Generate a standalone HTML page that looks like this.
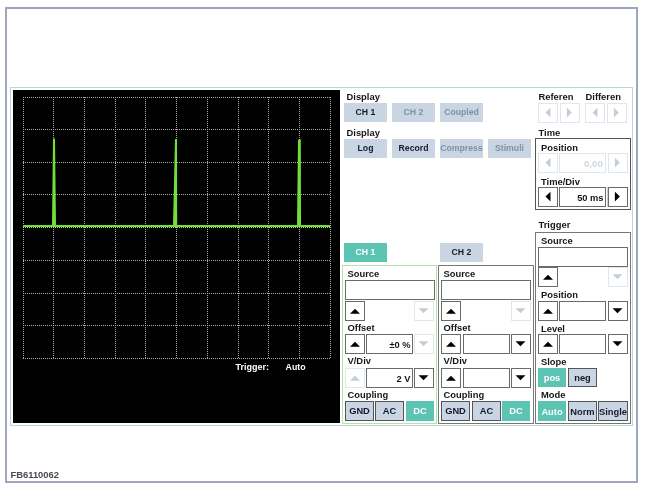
<!DOCTYPE html>
<html><head><meta charset="utf-8"><style>
html,body{margin:0;padding:0;background:#fff;width:645px;height:489px;overflow:hidden;position:relative;font-family:"Liberation Sans", sans-serif;}
body{will-change:transform;}
div{position:absolute;}
.t{white-space:nowrap;line-height:12px;}
.b{text-align:center;font-weight:bold;white-space:nowrap;overflow:hidden;}
svg{position:absolute;left:0;top:0;}
</style></head><body>
<div style="left:5px;top:7px;width:633px;height:476px;border:2px solid #9ea5bd;border-right-color:#9ca9c6;box-sizing:border-box;"></div>
<div style="left:10px;top:87px;width:623px;height:339px;border:1px solid #b9d8d3;box-sizing:border-box;"></div>
<div style="left:13px;top:90px;width:327px;height:333px;background:#000;"></div>

<svg width="645" height="489" shape-rendering="crispEdges"><line x1="23.5" y1="97" x2="23.5" y2="359" stroke="#acacac" stroke-dasharray="1 1"/><line x1="53.5" y1="97" x2="53.5" y2="359" stroke="#acacac" stroke-dasharray="1 1"/><line x1="84.5" y1="97" x2="84.5" y2="359" stroke="#acacac" stroke-dasharray="1 1"/><line x1="115.5" y1="97" x2="115.5" y2="359" stroke="#acacac" stroke-dasharray="1 1"/><line x1="145.5" y1="97" x2="145.5" y2="359" stroke="#acacac" stroke-dasharray="1 1"/><line x1="176.5" y1="97" x2="176.5" y2="359" stroke="#acacac" stroke-dasharray="1 1"/><line x1="207.5" y1="97" x2="207.5" y2="359" stroke="#acacac" stroke-dasharray="1 1"/><line x1="238.5" y1="97" x2="238.5" y2="359" stroke="#acacac" stroke-dasharray="1 1"/><line x1="268.5" y1="97" x2="268.5" y2="359" stroke="#acacac" stroke-dasharray="1 1"/><line x1="299.5" y1="97" x2="299.5" y2="359" stroke="#acacac" stroke-dasharray="1 1"/><line x1="330.5" y1="97" x2="330.5" y2="359" stroke="#acacac" stroke-dasharray="1 1"/><line x1="23" y1="97.5" x2="331" y2="97.5" stroke="#acacac" stroke-dasharray="1 1"/><line x1="23" y1="129.5" x2="331" y2="129.5" stroke="#acacac" stroke-dasharray="1 1"/><line x1="23" y1="162.5" x2="331" y2="162.5" stroke="#acacac" stroke-dasharray="1 1"/><line x1="23" y1="194.5" x2="331" y2="194.5" stroke="#acacac" stroke-dasharray="1 1"/><line x1="23" y1="227.5" x2="331" y2="227.5" stroke="#acacac" stroke-dasharray="1 1"/><line x1="23" y1="260.5" x2="331" y2="260.5" stroke="#acacac" stroke-dasharray="1 1"/><line x1="23" y1="293.5" x2="331" y2="293.5" stroke="#acacac" stroke-dasharray="1 1"/><line x1="23" y1="325.5" x2="331" y2="325.5" stroke="#acacac" stroke-dasharray="1 1"/><line x1="23" y1="358.5" x2="331" y2="358.5" stroke="#acacac" stroke-dasharray="1 1"/><rect x="23" y="225" width="307" height="2" fill="#72de3a"/><polygon shape-rendering="geometricPrecision" points="53,138.5 55,138.5 56,226 52,226" fill="#72de3a"/><polygon shape-rendering="geometricPrecision" points="175,139 177,139 177.2,226 173,226" fill="#72de3a"/><polygon shape-rendering="geometricPrecision" points="298,139.5 300.8,139.5 301,226 297,226" fill="#72de3a"/><line x1="23" y1="227.5" x2="330" y2="227.5" stroke="#a8ec78" stroke-dasharray="1 1"/></svg>
<div class="t" style="left:235.6px;top:360.88px;font-size:9px;color:#fff;font-weight:bold;">Trigger:</div>
<div class="t" style="left:285.6px;top:360.95px;font-size:8.8px;color:#fff;font-weight:bold;">Auto</div>
<div class="t" style="left:346.5px;top:90.74px;font-size:9.4px;color:#161616;font-weight:bold;">Display</div>
<div class="b" style="left:344px;top:103px;width:43px;height:19px;background:#c9d5e3;color:#161c26;font-size:8.7px;line-height:19px;letter-spacing:0px"><span style="position:relative;top:0px">CH 1</span></div>
<div class="b" style="left:392px;top:103px;width:43px;height:19px;background:#c9d5e3;color:#8090a5;font-size:8.7px;line-height:19px;letter-spacing:0px"><span style="position:relative;top:0px">CH 2</span></div>
<div class="b" style="left:440px;top:103px;width:43px;height:19px;background:#c9d5e3;color:#8090a5;font-size:8.7px;line-height:19px;letter-spacing:0px"><span style="position:relative;top:0px">Coupled</span></div>
<div class="t" style="left:346.5px;top:126.74px;font-size:9.4px;color:#161616;font-weight:bold;">Display</div>
<div class="b" style="left:344px;top:139px;width:43px;height:19px;background:#c9d5e3;color:#161c26;font-size:8.7px;line-height:19px;letter-spacing:0px"><span style="position:relative;top:0px">Log</span></div>
<div class="b" style="left:392px;top:139px;width:43px;height:19px;background:#c9d5e3;color:#161c26;font-size:8.7px;line-height:19px;letter-spacing:0px"><span style="position:relative;top:0px">Record</span></div>
<div class="b" style="left:440px;top:139px;width:43px;height:19px;background:#c9d5e3;color:#8090a5;font-size:8.7px;line-height:19px;letter-spacing:0px"><span style="position:relative;top:0px">Compress</span></div>
<div class="b" style="left:488px;top:139px;width:43px;height:19px;background:#c9d5e3;color:#8090a5;font-size:8.7px;line-height:19px;letter-spacing:0px"><span style="position:relative;top:0px">Stimuli</span></div>
<div class="t" style="left:538.5px;top:90.74px;font-size:9.4px;color:#161616;font-weight:bold;">Referen</div>
<div class="t" style="left:585.5px;top:90.74px;font-size:9.4px;color:#161616;font-weight:bold;">Differen</div>
<div style="left:538px;top:103px;width:20px;height:20px;box-shadow: inset 0 0 0 1px #e2e6ec;background:#fff;"></div>
<div style="left:560px;top:103px;width:20px;height:20px;box-shadow: inset 0 0 0 1px #e2e6ec;background:#fff;"></div>
<div style="left:585px;top:103px;width:20px;height:20px;box-shadow: inset 0 0 0 1px #e2e6ec;background:#fff;"></div>
<div style="left:607px;top:103px;width:20px;height:20px;box-shadow: inset 0 0 0 1px #e2e6ec;background:#fff;"></div>
<div class="t" style="left:538.5px;top:126.74px;font-size:9.4px;color:#161616;font-weight:bold;">Time</div>
<div style="left:535px;top:138px;width:96px;height:72px;box-shadow: inset 0 0 0 1px #555;"></div>
<div class="t" style="left:541px;top:141.74px;font-size:9.4px;color:#161616;font-weight:bold;">Position</div>
<div style="left:538px;top:153px;width:20px;height:20px;box-shadow: inset 0 0 0 1px #e2e6ec;background:#fff;"></div>
<div style="left:559px;top:153px;width:47px;height:20px;box-shadow: inset 0 0 0 1px #e2e6ec;background:#fff;"></div>
<div class="t" style="right:42px;top:157.60px;font-size:9.8px;color:#cdd5df;font-weight:bold;">0,00</div>
<div style="left:608px;top:153px;width:20px;height:20px;box-shadow: inset 0 0 0 1px #e2e6ec;background:#fff;"></div>
<div class="t" style="left:541px;top:175.74px;font-size:9.4px;color:#161616;font-weight:bold;">Time/Div</div>
<div style="left:538px;top:187px;width:20px;height:20px;box-shadow: inset 0 0 0 1px #6a6a6a;background:#fff;"></div>
<div style="left:559px;top:187px;width:47px;height:20px;box-shadow: inset 0 0 0 1px #6a6a6a;background:#fff;"></div>
<div class="t" style="right:41.5px;top:191.78px;font-size:9.3px;color:#161616;font-weight:bold;">50 ms</div>
<div style="left:607px;top:187px;width:1px;height:20px;background:#d0d0d0;"></div>
<div style="left:608px;top:187px;width:20px;height:20px;box-shadow: inset 0 0 0 1px #6a6a6a;background:#fff;"></div>
<div class="t" style="left:538.5px;top:218.74px;font-size:9.4px;color:#161616;font-weight:bold;">Trigger</div>
<div style="left:535px;top:232px;width:96px;height:192px;box-shadow: inset 0 0 0 1px #777;"></div>
<div class="t" style="left:541px;top:234.74px;font-size:9.4px;color:#161616;font-weight:bold;">Source</div>
<div style="left:538px;top:247px;width:90px;height:20px;box-shadow: inset 0 0 0 1px #6a6a6a;background:#fff;"></div>
<div style="left:538px;top:267px;width:20px;height:20px;box-shadow: inset 0 0 0 1px #6a6a6a;background:#fff;"></div>
<div style="left:608px;top:267px;width:20px;height:20px;box-shadow: inset 0 0 0 1px #e2e6ec;background:#fff;"></div>
<div class="t" style="left:541px;top:288.74px;font-size:9.4px;color:#161616;font-weight:bold;">Position</div>
<div style="left:538px;top:301px;width:20px;height:20px;box-shadow: inset 0 0 0 1px #6a6a6a;background:#fff;"></div>
<div style="left:559px;top:301px;width:47px;height:20px;box-shadow: inset 0 0 0 1px #6a6a6a;background:#fff;"></div>
<div style="left:608px;top:301px;width:20px;height:20px;box-shadow: inset 0 0 0 1px #6a6a6a;background:#fff;"></div>
<div class="t" style="left:541px;top:322.74px;font-size:9.4px;color:#161616;font-weight:bold;">Level</div>
<div style="left:538px;top:334px;width:20px;height:20px;box-shadow: inset 0 0 0 1px #6a6a6a;background:#fff;"></div>
<div style="left:559px;top:334px;width:47px;height:20px;box-shadow: inset 0 0 0 1px #6a6a6a;background:#fff;"></div>
<div style="left:608px;top:334px;width:20px;height:20px;box-shadow: inset 0 0 0 1px #6a6a6a;background:#fff;"></div>
<div class="t" style="left:541px;top:355.74px;font-size:9.4px;color:#161616;font-weight:bold;">Slope</div>
<div class="b" style="left:538px;top:368px;width:28px;height:19px;background:#5dc3b2;color:#fff;font-size:9.3px;line-height:19px;letter-spacing:0px"><span style="position:relative;top:1px">pos</span></div>
<div class="b" style="left:568px;top:368px;width:29px;height:19px;background:#c9d5e3;box-shadow: inset 0 0 0 1px #555;color:#161c26;font-size:9.3px;line-height:19px;letter-spacing:0px"><span style="position:relative;top:1px">neg</span></div>
<div class="t" style="left:541px;top:388.74px;font-size:9.4px;color:#161616;font-weight:bold;">Mode</div>
<div class="b" style="left:538px;top:401px;width:28px;height:20px;background:#5dc3b2;color:#fff;font-size:9.3px;line-height:20px;letter-spacing:0px"><span style="position:relative;top:0.5px">Auto</span></div>
<div class="b" style="left:568px;top:401px;width:29px;height:20px;background:#c9d5e3;box-shadow: inset 0 0 0 1px #555;color:#161c26;font-size:9.3px;line-height:20px;letter-spacing:0px"><span style="position:relative;top:0.5px">Norm</span></div>
<div class="b" style="left:598px;top:401px;width:30px;height:20px;background:#c9d5e3;box-shadow: inset 0 0 0 1px #555;color:#161c26;font-size:9.3px;line-height:20px;letter-spacing:0px"><span style="position:relative;top:0.5px">Single</span></div>
<div class="b" style="left:344px;top:243px;width:43px;height:19px;background:#5dc3b2;color:#fff;font-size:8.7px;line-height:19px;letter-spacing:0px"><span style="position:relative;top:0px">CH 1</span></div>
<div class="b" style="left:440px;top:243px;width:43px;height:19px;background:#c9d5e3;color:#161c26;font-size:8.7px;line-height:19px;letter-spacing:0px"><span style="position:relative;top:0px">CH 2</span></div>
<div style="left:342px;top:265px;width:95px;height:159px;box-shadow: inset 0 0 0 1px #b9e2a9;"></div>
<div class="t" style="left:347.5px;top:267.74px;font-size:9.4px;color:#161616;font-weight:bold;">Source</div>
<div style="left:345px;top:280px;width:90px;height:20px;box-shadow: inset 0 0 0 1px #6a6a6a;background:#fff;"></div>
<div style="left:345px;top:301px;width:20px;height:20px;box-shadow: inset 0 0 0 1px #6a6a6a;background:#fff;"></div>
<div style="left:414px;top:301px;width:20px;height:20px;box-shadow: inset 0 0 0 1px #e2e6ec;background:#fff;"></div>
<div class="t" style="left:347.5px;top:321.74px;font-size:9.4px;color:#161616;font-weight:bold;">Offset</div>
<div style="left:345px;top:334px;width:20px;height:20px;box-shadow: inset 0 0 0 1px #6a6a6a;background:#fff;"></div>
<div style="left:366px;top:334px;width:47px;height:20px;box-shadow: inset 0 0 0 1px #6a6a6a;background:#fff;"></div>
<div class="t" style="right:234.5px;top:338.78px;font-size:9.3px;color:#161616;font-weight:bold;">±0 %</div>
<div style="left:414px;top:334px;width:20px;height:20px;box-shadow: inset 0 0 0 1px #e2e6ec;background:#fff;"></div>
<div class="t" style="left:347.5px;top:354.74px;font-size:9.4px;color:#161616;font-weight:bold;">V/Div</div>
<div style="left:345px;top:368px;width:20px;height:20px;box-shadow: inset 0 0 0 1px #e2e6ec;background:#fff;"></div>
<div style="left:366px;top:368px;width:47px;height:20px;box-shadow: inset 0 0 0 1px #6a6a6a;background:#fff;"></div>
<div class="t" style="right:234.5px;top:372.78px;font-size:9.3px;color:#161616;font-weight:bold;">2 V</div>
<div style="left:414px;top:368px;width:20px;height:20px;box-shadow: inset 0 0 0 1px #6a6a6a;background:#fff;"></div>
<div class="t" style="left:347.5px;top:388.74px;font-size:9.4px;color:#161616;font-weight:bold;">Coupling</div>
<div class="b" style="left:345px;top:401px;width:29px;height:20px;background:#c9d5e3;box-shadow: inset 0 0 0 1px #555;color:#161c26;font-size:9.3px;line-height:20px;letter-spacing:0px"><span style="position:relative;top:0px">GND</span></div>
<div class="b" style="left:375px;top:401px;width:29px;height:20px;background:#c9d5e3;box-shadow: inset 0 0 0 1px #555;color:#161c26;font-size:9.3px;line-height:20px;letter-spacing:0px"><span style="position:relative;top:0px">AC</span></div>
<div class="b" style="left:406px;top:401px;width:28px;height:20px;background:#5dc3b2;color:#fff;font-size:9.3px;line-height:20px;letter-spacing:0px"><span style="position:relative;top:0px">DC</span></div>
<div style="left:438px;top:265px;width:96px;height:159px;box-shadow: inset 0 0 0 1px #777;"></div>
<div class="t" style="left:443.5px;top:267.74px;font-size:9.4px;color:#161616;font-weight:bold;">Source</div>
<div style="left:441px;top:280px;width:90px;height:20px;box-shadow: inset 0 0 0 1px #6a6a6a;background:#fff;"></div>
<div style="left:441px;top:301px;width:20px;height:20px;box-shadow: inset 0 0 0 1px #6a6a6a;background:#fff;"></div>
<div style="left:511px;top:301px;width:20px;height:20px;box-shadow: inset 0 0 0 1px #e2e6ec;background:#fff;"></div>
<div class="t" style="left:443.5px;top:321.74px;font-size:9.4px;color:#161616;font-weight:bold;">Offset</div>
<div style="left:441px;top:334px;width:20px;height:20px;box-shadow: inset 0 0 0 1px #6a6a6a;background:#fff;"></div>
<div style="left:463px;top:334px;width:47px;height:20px;box-shadow: inset 0 0 0 1px #6a6a6a;background:#fff;"></div>
<div style="left:511px;top:334px;width:20px;height:20px;box-shadow: inset 0 0 0 1px #6a6a6a;background:#fff;"></div>
<div class="t" style="left:443.5px;top:354.74px;font-size:9.4px;color:#161616;font-weight:bold;">V/Div</div>
<div style="left:441px;top:368px;width:20px;height:20px;box-shadow: inset 0 0 0 1px #6a6a6a;background:#fff;"></div>
<div style="left:463px;top:368px;width:47px;height:20px;box-shadow: inset 0 0 0 1px #6a6a6a;background:#fff;"></div>
<div style="left:511px;top:368px;width:20px;height:20px;box-shadow: inset 0 0 0 1px #6a6a6a;background:#fff;"></div>
<div class="t" style="left:443.5px;top:388.74px;font-size:9.4px;color:#161616;font-weight:bold;">Coupling</div>
<div class="b" style="left:441px;top:401px;width:29px;height:20px;background:#c9d5e3;box-shadow: inset 0 0 0 1px #555;color:#161c26;font-size:9.3px;line-height:20px;letter-spacing:0px"><span style="position:relative;top:0px">GND</span></div>
<div class="b" style="left:472px;top:401px;width:29px;height:20px;background:#c9d5e3;box-shadow: inset 0 0 0 1px #555;color:#161c26;font-size:9.3px;line-height:20px;letter-spacing:0px"><span style="position:relative;top:0px">AC</span></div>
<div class="b" style="left:502px;top:401px;width:28px;height:20px;background:#5dc3b2;color:#fff;font-size:9.3px;line-height:20px;letter-spacing:0px"><span style="position:relative;top:0px">DC</span></div>
<div class="t" style="left:10.5px;top:468.74px;font-size:9.4px;color:#454a53;font-weight:bold;">FB6110062</div>

<svg width="645" height="489"><polygon points="550.5,107.8 550.5,117.39999999999999 545.5,112.6" fill="#c3cedb"/><polygon points="566.9,107.8 566.9,117.39999999999999 571.9,112.6" fill="#c3cedb"/><polygon points="597.5,107.8 597.5,117.39999999999999 592.5,112.6" fill="#c3cedb"/><polygon points="613.9,107.8 613.9,117.39999999999999 618.9,112.6" fill="#c3cedb"/><polygon points="550.5,157.79999999999998 550.5,167.4 545.5,162.6" fill="#c3cedb"/><polygon points="614.9,157.79999999999998 614.9,167.4 619.9,162.6" fill="#c3cedb"/><polygon points="550.5,191.79999999999998 550.5,201.4 545.5,196.6" fill="#000"/><polygon points="614.9,191.79999999999998 614.9,201.4 619.9,196.6" fill="#000"/><polygon points="543.0,279.7 553.0,279.7 548.0,274.7" fill="#000"/><polygon points="612.5,274.3 622.5,274.3 617.5,279.3" fill="#c3cedb"/><polygon points="543.0,313.7 553.0,313.7 548.0,308.7" fill="#000"/><polygon points="612.5,308.3 622.5,308.3 617.5,313.3" fill="#000"/><polygon points="543.0,346.7 553.0,346.7 548.0,341.7" fill="#000"/><polygon points="612.5,341.3 622.5,341.3 617.5,346.3" fill="#000"/><polygon points="350.0,313.7 360.0,313.7 355.0,308.7" fill="#000"/><polygon points="418.5,308.3 428.5,308.3 423.5,313.3" fill="#c3cedb"/><polygon points="350.0,346.7 360.0,346.7 355.0,341.7" fill="#000"/><polygon points="418.5,341.3 428.5,341.3 423.5,346.3" fill="#c3cedb"/><polygon points="350.0,380.7 360.0,380.7 355.0,375.7" fill="#c3cedb"/><polygon points="418.5,375.3 428.5,375.3 423.5,380.3" fill="#000"/><polygon points="446.0,313.7 456.0,313.7 451.0,308.7" fill="#000"/><polygon points="515.5,308.3 525.5,308.3 520.5,313.3" fill="#c3cedb"/><polygon points="446.0,346.7 456.0,346.7 451.0,341.7" fill="#000"/><polygon points="515.5,341.3 525.5,341.3 520.5,346.3" fill="#000"/><polygon points="446.0,380.7 456.0,380.7 451.0,375.7" fill="#000"/><polygon points="515.5,375.3 525.5,375.3 520.5,380.3" fill="#000"/></svg>
</body></html>
